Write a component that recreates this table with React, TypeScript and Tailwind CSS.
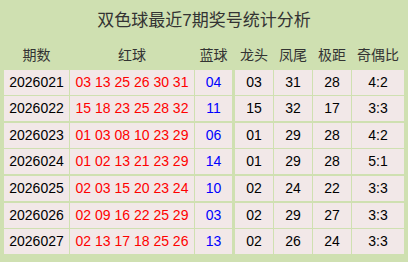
const rows = [
  { issue: '2026021', red: '03 13 25 26 30 31', blue: '04', head: '03', tail: '31', span: '28', ratio: '4:2' },
  { issue: '2026022', red: '15 18 23 25 28 32', blue: '11', head: '15', tail: '32', span: '17', ratio: '3:3' },
  { issue: '2026023', red: '01 03 08 10 23 29', blue: '06', head: '01', tail: '29', span: '28', ratio: '4:2' },
  { issue: '2026024', red: '01 02 13 21 23 29', blue: '14', head: '01', tail: '29', span: '28', ratio: '5:1' },
  { issue: '2026025', red: '02 03 15 20 23 24', blue: '10', head: '02', tail: '24', span: '22', ratio: '3:3' },
  { issue: '2026026', red: '02 09 16 22 25 29', blue: '03', head: '02', tail: '29', span: '27', ratio: '3:3' },
  { issue: '2026027', red: '02 13 17 18 25 26', blue: '13', head: '02', tail: '26', span: '24', ratio: '3:3' },
]

const cell = 'flex items-center justify-center bg-[#f2e8e8]'

export default function App() {
  return (
    <div
      className="w-[408px] h-[262px] bg-[#cfe0b1] px-[4px] text-[14px]"
      style={{ fontFamily: '"Liberation Sans", "Noto Sans CJK SC", sans-serif' }}
    >
      <div className="h-[41px] flex items-center justify-center text-[17px] text-[#333]">
        双色球最近7期奖号统计分析
      </div>

      {/* header row */}
      <div className="flex h-[28px] gap-x-[1px] text-[#333]">
        <div className="w-[65px] flex items-center justify-center">期数</div>
        <div className="w-[124px] flex items-center justify-center">红球</div>
        <div className="w-[37px] flex items-center justify-center">蓝球</div>
        <div className="w-[38px] ml-[2px] flex items-center justify-center">龙头</div>
        <div className="w-[38px] flex items-center justify-center">凤尾</div>
        <div className="w-[38px] flex items-center justify-center">极距</div>
        <div className="w-[52px] flex items-center justify-center">奇偶比</div>
      </div>

      <div className="flex flex-col gap-y-[1.67px] mt-[0.5px]">
        {rows.map((r) => (
          <div key={r.issue} className="flex h-[25px] gap-x-[1px]">
            <div className={`w-[65px] ${cell} text-black`}>{r.issue}</div>
            <div className={`w-[124px] ${cell} text-[#ff0000]`}>{r.red}</div>
            <div className={`w-[37px] ${cell} text-[#0000ff]`}>{r.blue}</div>
            <div className={`w-[38px] ml-[2px] ${cell} text-black`}>{r.head}</div>
            <div className={`w-[38px] ${cell} text-black`}>{r.tail}</div>
            <div className={`w-[38px] ${cell} text-black`}>{r.span}</div>
            <div className={`w-[52px] ${cell} text-black`}>{r.ratio}</div>
          </div>
        ))}
      </div>
    </div>
  )
}
